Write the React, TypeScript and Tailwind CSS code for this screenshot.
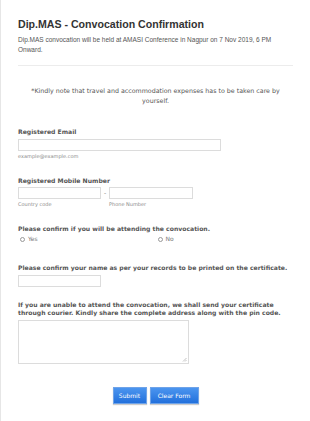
import React from "react";

const label = "font-['DejaVu_Sans',Verdana,sans-serif] font-bold text-[6.1px] leading-[8px] text-[#555]";
const helper = "font-['DejaVu_Sans',Verdana,sans-serif] text-[5px] leading-[7px] text-[#8a8a8a]";
const input = "block h-[12px] border border-[#dcdcdc] bg-white";

function Radio({ text }: { text: string }) {
  return (
    <div className="flex items-center gap-[3px] pl-[2px]">
      <span className="h-[5px] w-[5px] rounded-full border border-[#999]" />
      <span className="font-['DejaVu_Sans',Verdana,sans-serif] text-[6px] leading-[8px] text-[#777]">{text}</span>
    </div>
  );
}

export default function App() {
  return (
    <div className="min-h-[421px] w-[310px] border-l border-[#e6e6e6] bg-white px-[17px] pt-[18px] antialiased">
      <h1 className="font-['Liberation_Sans',Arial,sans-serif] text-[10.6px] font-bold leading-[12px] text-[#333]">
        Dip.MAS - Convocation Confirmation
      </h1>
      <p className="mt-[5px] font-['Liberation_Sans',Arial,sans-serif] text-[6.5px] leading-[10px] text-[#555]">
        Dip.MAS convocation will be held at AMASI Conference in Nagpur on 7 Nov 2019, 6 PM Onward.
      </p>
      <div className="mt-[10px] border-t border-[#ececec]" />

      <p className="mt-[20px] px-[8px] text-center font-['DejaVu_Sans',Verdana,sans-serif] text-[6.3px] leading-[10px] text-[#555]">
        *Kindly note that travel and accommodation expenses has to be taken care by yourself.
      </p>

      <div className="mt-[22px]">
        <div className={label}>Registered Email</div>
        <div className={`${input} mt-[3px] w-[203px]`} />
        <div className={`${helper} mt-[2px]`}>example@example.com</div>
      </div>

      <div className="mt-[17px]">
        <div className={label}>Registered Mobile Number</div>
        <div className="mt-[2px] flex items-start">
          <div>
            <div className={`${input} w-[83px]`} />
            <div className={`${helper} mt-[2px]`}>Country code</div>
          </div>
          <div className="w-[8px] pt-[3px] text-center font-['DejaVu_Sans',sans-serif] text-[6px] leading-[6px] text-[#777]">-</div>
          <div>
            <div className={`${input} w-[84px]`} />
            <div className={`${helper} mt-[2px]`}>Phone Number</div>
          </div>
        </div>
      </div>

      <div className="mt-[17px]">
        <div className={label}>Please confirm if you will be attending the convocation.</div>
        <div className="mt-[2px] grid grid-cols-2">
          <Radio text="Yes" />
          <Radio text="No" />
        </div>
      </div>

      <div className="mt-[21px]">
        <div className={label}>Please confirm your name as per your records to be printed on the certificate.</div>
        <div className={`${input} mt-[3px] w-[83px]`} />
      </div>

      <div className="mt-[14px]">
        <div className={label}>
          If you are unable to attend the convocation, we shall send your certificate through courier. Kindly share the complete address along with the pin code.
        </div>
        <div className="relative mt-[3px] h-[44px] w-[171px] border border-[#dcdcdc] bg-white">
          <svg className="absolute bottom-[1px] right-[1px]" width="5" height="5" viewBox="0 0 5 5">
            <path d="M4.5 1 L1 4.5 M4.5 3 L3 4.5" stroke="#aaa" strokeWidth="0.7" />
          </svg>
        </div>
      </div>

      <div className="mt-[23px] flex justify-center gap-[3px]">
        <button className="h-[17px] w-[34px] border border-[#6fa3e8] bg-gradient-to-b from-[#4b95ef] to-[#2270dc] font-['DejaVu_Sans',Verdana,sans-serif] text-[6px] text-white shadow-[0_1px_1px_rgba(0,0,0,0.2)]">
          Submit
        </button>
        <button className="h-[17px] w-[49px] border border-[#6fa3e8] bg-gradient-to-b from-[#4b95ef] to-[#2270dc] font-['DejaVu_Sans',Verdana,sans-serif] text-[6px] text-white shadow-[0_1px_1px_rgba(0,0,0,0.2)]">
          Clear Form
        </button>
      </div>
    </div>
  );
}
